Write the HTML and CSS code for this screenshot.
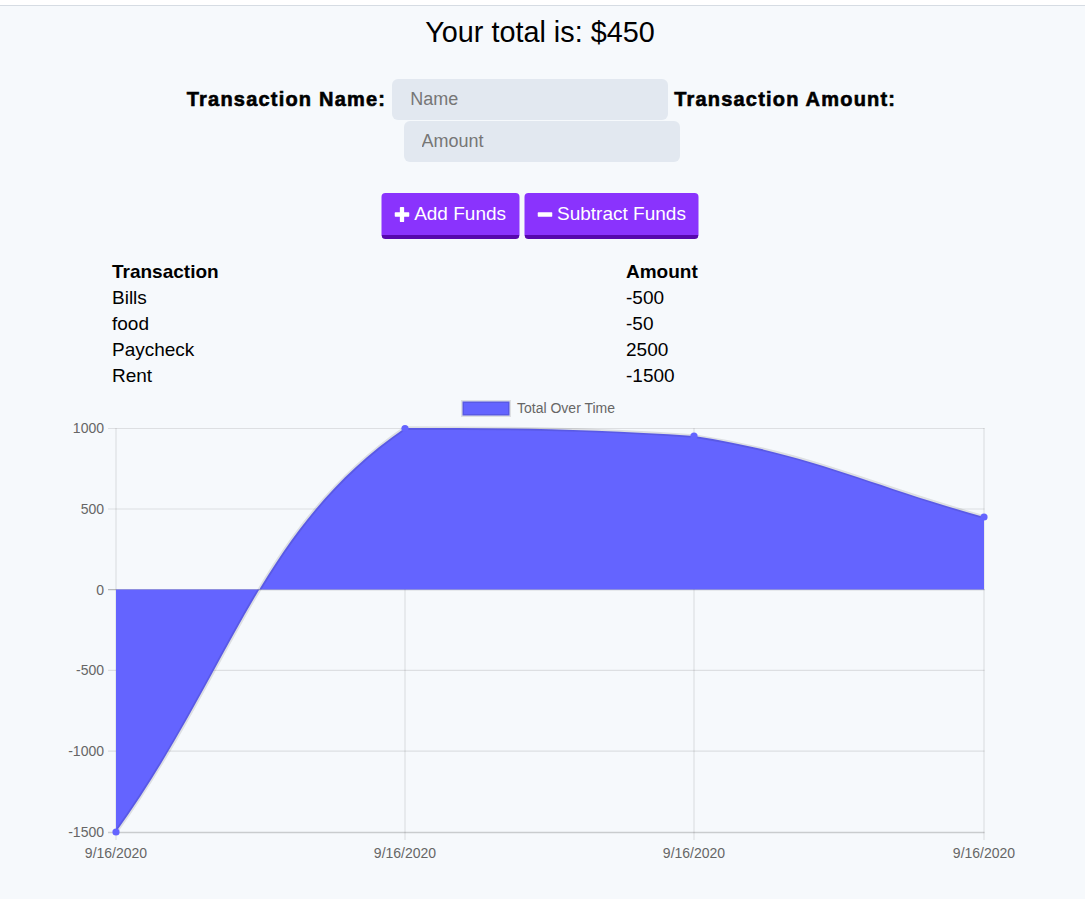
FILE: index.html
```html
<!DOCTYPE html>
<html>
<head>
<meta charset="utf-8">
<link rel="stylesheet" href="styles.css">
</head>
<body>
<div class="topbar"></div>
<h1 class="total">Your total is: $450</h1>
<form class="entry">
  <label class="field-label" for="t-name">Transaction Name:</label>
  <input class="field" id="t-name" type="text" placeholder="Name">
  <label class="field-label" for="t-amount">Transaction Amount:</label>
  <input class="field field-amount" id="t-amount" type="number" placeholder="Amount">
</form>
<div class="actions">
  <button class="btn" type="button"><svg class="ico" viewBox="0 0 14 14"><rect x="5" y="0" width="4" height="14" rx="0.8"/><rect x="0" y="5" width="14" height="4" rx="0.8"/></svg>Add Funds</button>
  <button class="btn" type="button"><svg class="ico" viewBox="0 0 14 14"><rect x="0" y="5" width="14" height="4" rx="0.8"/></svg>Subtract Funds</button>
</div>
<div class="ledger">
  <div class="cell head">Transaction</div><div class="cell head">Amount</div>
  <div class="cell">Bills</div><div class="cell">-500</div>
  <div class="cell">food</div><div class="cell">-50</div>
  <div class="cell">Paycheck</div><div class="cell">2500</div>
  <div class="cell">Rent</div><div class="cell">-1500</div>
</div>
<svg class="chart" width="1085" height="470" viewBox="0 392 1085 470">
  <g class="legend">
    <rect x="462.5" y="401.5" width="47" height="14" fill="#6464ff" stroke="rgba(0,0,0,0.1)" stroke-width="3"/>
    <text x="517" y="413" class="tick">Total Over Time</text>
  </g>
  <g class="grid" stroke="rgba(0,0,0,0.1)" stroke-width="1.2" fill="none">
    <line x1="108" y1="428.5" x2="984.5" y2="428.5"/>
    <line x1="108" y1="509" x2="984.5" y2="509"/>
    <line x1="108" y1="670.4" x2="984.5" y2="670.4"/>
    <line x1="108" y1="751.2" x2="984.5" y2="751.2"/>
    <line x1="116" y1="428" x2="116" y2="840"/>
    <line x1="405" y1="428" x2="405" y2="840"/>
    <line x1="694" y1="428" x2="694" y2="840"/>
    <line x1="984" y1="428" x2="984" y2="840"/>
  </g>
  <line x1="108" y1="589.6" x2="984.5" y2="589.6" stroke="rgba(0,0,0,0.25)" stroke-width="1.2"/>
  <line x1="108" y1="832.5" x2="984.5" y2="832.5" stroke="rgba(0,0,0,0.18)" stroke-width="1.4"/>
  <path d="M116,832 C231.6,670.4 258.9,528.1 405,428 C490.1,428 580.6,428 694,436 C812.2,454.2 868,484.6 984,517 L984,589.6 L116,589.6 Z" fill="#6464ff"/>
  <path d="M116,832 C231.6,670.4 258.9,528.1 405,428 C490.1,428 580.6,428 694,436 C812.2,454.2 868,484.6 984,517" fill="none" stroke="rgba(0,0,0,0.1)" stroke-width="3.6"/>
  <g fill="#6464ff">
    <circle cx="116" cy="832" r="3.6"/>
    <circle cx="405" cy="428.5" r="3.6"/>
    <circle cx="694" cy="436" r="3.6"/>
    <circle cx="984" cy="517" r="3.6"/>
  </g>
  <g class="ylabels" text-anchor="end">
    <text x="104" y="433" class="tick">1000</text>
    <text x="104" y="514" class="tick">500</text>
    <text x="104" y="594.5" class="tick">0</text>
    <text x="104" y="675" class="tick">-500</text>
    <text x="104" y="756" class="tick">-1000</text>
    <text x="104" y="837" class="tick">-1500</text>
  </g>
  <g class="xlabels" text-anchor="middle">
    <text x="116" y="858" class="tick">9/16/2020</text>
    <text x="405" y="858" class="tick">9/16/2020</text>
    <text x="694" y="858" class="tick">9/16/2020</text>
    <text x="984" y="858" class="tick">9/16/2020</text>
  </g>
</svg>
</body>
</html>
```
FILE: styles.css
```css
html, body {
  margin: 0;
  padding: 0;
}
body {
  background: #f6f9fc;
  font-family: "Liberation Sans", Arial, Helvetica, sans-serif;
  color: #000;
  min-height: 899px;
}
.topbar {
  height: 5px;
  background: #ffffff;
  border-bottom: 1px solid #d6dce3;
}
.total {
  margin: 10px 0 0;
  padding-right: 5px;
  font-size: 28.8px;
  line-height: 32px;
  font-weight: 400;
  text-align: center;
}
.entry {
  width: 940px;
  margin: 31px auto 0;
  display: flex;
  flex-wrap: wrap;
  justify-content: center;
  align-items: center;
  column-gap: 6px;
  row-gap: 1px;
  transform: translateX(-1px);
}
.field-label {
  font-size: 20px;
  font-weight: 700;
  letter-spacing: 1.2px;
  -webkit-text-stroke: 0.6px #000;
}
.field {
  box-sizing: border-box;
  width: 276px;
  height: 41px;
  border: none;
  border-radius: 6px;
  background: #e2e8f0;
  padding: 0 18px;
  font-family: "Liberation Sans", Arial, sans-serif;
  font-size: 18px;
  color: #333;
  outline: none;
}
.field::placeholder {
  color: #767676;
}
.field-amount {
  -moz-appearance: textfield;
}
.field-amount::-webkit-outer-spin-button,
.field-amount::-webkit-inner-spin-button {
  -webkit-appearance: none;
  margin: 0;
}
.actions {
  display: flex;
  justify-content: center;
  gap: 5px;
  margin-top: 31px;
  transform: translateX(-2.5px);
}
.btn {
  display: flex;
  align-items: center;
  gap: 5px;
  height: 46px;
  box-sizing: border-box;
  padding: 0 13px 0 13px;
  border: none;
  border-bottom: 4px solid #5708ad;
  border-radius: 4px;
  background: #8a33fd;
  color: #fff;
  font-family: "Liberation Sans", Arial, sans-serif;
  font-size: 19px;
}
.ico {
  width: 15px;
  height: 15px;
  fill: #fff;
}
.ledger {
  width: 860px;
  margin: 20px auto 0;
  display: grid;
  grid-template-columns: 514px 1fr;
  font-size: 19px;
  line-height: 26px;
  transform: translateX(-0.5px);
}
.cell.head {
  font-weight: 700;
}
.chart {
  display: block;
  margin-top: 3px;
}
.tick {
  font-family: "Liberation Sans", Arial, Helvetica, sans-serif;
  font-size: 14px;
  fill: #666;
}
```
